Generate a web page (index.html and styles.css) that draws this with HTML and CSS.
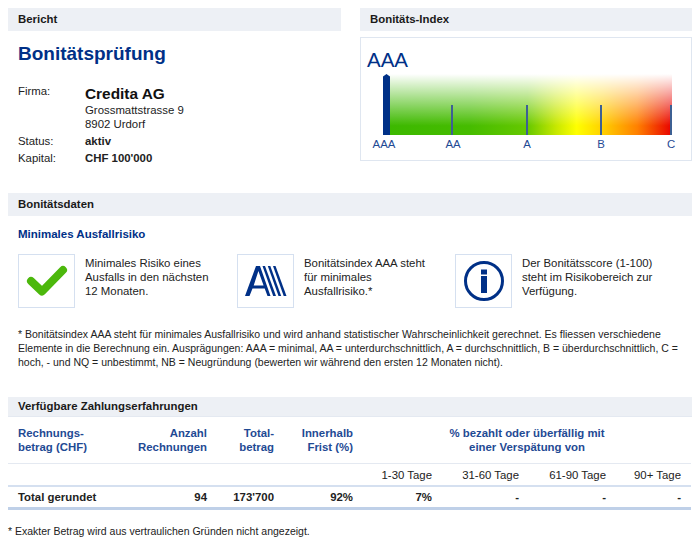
FILE: index.html
```html
<!DOCTYPE html>
<html>
<head>
	<meta charset="UTF-8">
	<title>Bonitätsprüfung</title>
	<link rel="stylesheet" href="styles.css">
</head>
<body>
	<div class="top">
		<div class="report">
			<div class="band">Bericht</div>
			<h1>Bonitätsprüfung</h1>
			<div class="facts">
				<div class="fact-label first">Firma:</div>
				<div class="fact-value first">
					<div class="company">Credita AG</div>
					<div>Grossmattstrasse 9</div>
					<div>8902 Urdorf</div>
				</div>
				<div class="fact-label">Status:</div>
				<div class="fact-value strong">aktiv</div>
				<div class="fact-label">Kapital:</div>
				<div class="fact-value strong">CHF 100'000</div>
			</div>
		</div>
		<div class="index">
			<div class="band">Bonitäts-Index</div>
			<div class="gauge">
				<div class="gauge-rating">AAA</div>
				<div class="gauge-bar">
					<div class="gauge-fade"></div>
					<svg class="gauge-marker" width="7" height="61" viewBox="0 0 7 61"><path d="M0 2.5 L3.5 0 L7 2.5 V61 H0 Z" fill="#003087"/></svg>
					<span class="tick tick-aa"></span>
					<span class="tick tick-a"></span>
					<span class="tick tick-b"></span>
					<span class="tick tick-c"></span>
				</div>
				<span class="scale scale-aaa">AAA</span>
				<span class="scale scale-aa">AA</span>
				<span class="scale scale-a">A</span>
				<span class="scale scale-b">B</span>
				<span class="scale scale-c">C</span>
			</div>
		</div>
	</div>

	<div class="band data-band">Bonitätsdaten</div>
	<h2>Minimales Ausfallrisiko</h2>
	<div class="cards">
		<div class="card">
			<div class="card-icon">
				<svg width="42" height="32" viewBox="0 0 42 32"><path d="M5 16 L16 26.5 L37 5" fill="none" stroke="#4cb80c" stroke-width="8" stroke-linecap="round" stroke-linejoin="round"/></svg>
			</div>
			<div class="card-text">Minimales Risiko eines<br>Ausfalls in den nächsten<br>12 Monaten.</div>
		</div>
		<div class="card">
			<div class="card-icon">
				<svg width="42" height="30" viewBox="0 0 42 30" fill="#003087"><path d="M0 30 L11 0 H15 L25.5 30 H22.5 L19.7 22.5 H7.5 L4.5 30 Z M8.7 19.5 H18.6 L13.4 5 Z" fill-rule="evenodd"/><path d="M17.5 0 H20 L31 30 H28.2 Z"/><path d="M22.8 0 H25.3 L36.2 30 H33.5 Z"/><path d="M28 0 H30.5 L41.5 30 H38.7 Z"/></svg>
			</div>
			<div class="card-text">Bonitätsindex AAA steht<br>für minimales<br>Ausfallrisiko.*</div>
		</div>
		<div class="card">
			<div class="card-icon">
				<svg width="42" height="42" viewBox="0 0 42 42"><circle cx="21" cy="21" r="18.5" fill="none" stroke="#003087" stroke-width="3"/><rect x="18" y="9.5" width="6" height="5" fill="#003087"/><rect x="18" y="16" width="6" height="17" fill="#003087"/></svg>
			</div>
			<div class="card-text">Der Bonitätsscore (1-100)<br>steht im Risikobereich zur<br>Verfügung.</div>
		</div>
	</div>
	<p class="note">* Bonitätsindex AAA steht für minimales Ausfallrisiko und wird anhand statistischer Wahrscheinlichkeit gerechnet. Es fliessen verschiedene Elemente in die Berechnung ein. Ausprägungen: AAA = minimal, AA = unterdurchschnittlich, A = durchschnittlich, B = überdurchschnittlich, C = hoch, - und NQ = unbestimmt, NB = Neugründung (bewerten wir während den ersten 12 Monaten nicht).</p>

	<div class="band table-band">Verfügbare Zahlungserfahrungen</div>
	<table>
		<colgroup>
			<col class="c1"><col class="c2"><col class="c3"><col class="c4"><col class="c5"><col class="c6"><col class="c7"><col class="c8">
		</colgroup>
		<tr class="head">
			<th class="left">Rechnungs-<br>betrag (CHF)</th>
			<th>Anzahl<br>Rechnungen</th>
			<th>Total-<br>betrag</th>
			<th>Innerhalb<br>Frist (%)</th>
			<th class="center" colspan="4">% bezahlt oder überfällig mit<br>einer Verspätung von</th>
		</tr>
		<tr class="sub">
			<td></td><td></td><td></td><td></td>
			<td>1-30 Tage</td><td>31-60 Tage</td><td>61-90 Tage</td><td>90+ Tage</td>
		</tr>
		<tr class="total">
			<td class="left">Total gerundet</td>
			<td>94</td><td>173'700</td><td>92%</td><td>7%</td><td>-</td><td>-</td><td>-</td>
		</tr>
	</table>
	<p class="foot">* Exakter Betrag wird aus vertraulichen Gründen nicht angezeigt.</p>
</body>
</html>
```

FILE: styles.css
```css
body {
	margin: 0;
	padding: 8px 8px 0;
	background-color: #fff;
	font-family: "Liberation Sans", Arial, sans-serif;
	font-size: 11.4px;
	line-height: 14px;
	color: #222;
}
.top {
	display: grid;
	grid-template-columns: 333px 332px;
	column-gap: 19px;
	height: 185px;
}
.band {
	height: 23px;
	line-height: 23px;
	padding-left: 10px;
	background-color: #edf0f5;
	font-weight: bold;
	color: #1a1a1a;
}
h1 {
	margin: 11px 0 0 10px;
	font-size: 19px;
	line-height: 24px;
	color: #003087;
}
.facts {
	display: grid;
	grid-template-columns: 67px 1fr;
	margin: 18px 0 0 10px;
	row-gap: 3px;
}
.company {
	font-size: 15.4px;
	line-height: 19px;
	font-weight: bold;
	color: #111;
}
.strong {
	font-weight: bold;
}
.gauge {
	position: relative;
	height: 122px;
	margin-top: 6px;
	border: 1px solid #dfe6f0;
}
.gauge-rating {
	position: absolute;
	left: 6px;
	top: 9px;
	font-size: 20.5px;
	line-height: 26px;
	color: #003087;
}
.gauge-bar {
	position: absolute;
	left: 22px;
	top: 36px;
	width: 289px;
	height: 61px;
	background: linear-gradient(to right, #3cb800 0%, #46bc00 30%, #66c800 50%, #c8e800 60%, #ffff00 67%, #ffd000 76%, #ff8000 88%, #e80000 100%);
}
.gauge-fade {
	position: absolute;
	inset: 0;
	background: linear-gradient(to bottom, #fff 0%, rgba(255, 255, 255, 0) 85%);
}
.gauge-marker {
	position: absolute;
	left: 0;
	top: 0;
	display: block;
}
.tick {
	position: absolute;
	bottom: 0;
	width: 2px;
	height: 30px;
	background-color: #3d6093;
}
.tick-aa { left: 68px; }
.tick-a { left: 143px; }
.tick-b { left: 217px; }
.tick-c { left: 287px; }
.scale {
	position: absolute;
	top: 99px;
	width: 40px;
	margin-left: -20px;
	text-align: center;
	color: #1f4a94;
}
.scale-aaa { left: 23px; }
.scale-aa { left: 92px; }
.scale-a { left: 166px; }
.scale-b { left: 240px; }
.scale-c { left: 310px; }
h2 {
	margin: 11px 0 0 10px;
	font-size: 11.5px;
	line-height: 14px;
	color: #003087;
}
.cards {
	display: grid;
	grid-template-columns: 219px 218px 1fr;
	margin: 13px 0 0 10px;
}
.card {
	display: flex;
	gap: 10px;
}
.card-icon {
	display: flex;
	align-items: center;
	justify-content: center;
	box-sizing: border-box;
	width: 57px;
	height: 54px;
	border: 1px solid #d5e0f0;
}
.card-text {
	padding-top: 2px;
}
.note {
	margin: 19px 0 0;
	font-size: 10.5px;
	line-height: 14px;
	padding-left: 10px;
	width: 665px;
}
.table-band {
	margin-top: 28px;
	height: 19px;
	line-height: 19px;
	border-bottom: 1px solid #e4e9f1;
}
table {
	width: 683px;
	border-collapse: collapse;
	table-layout: fixed;
}
.c1 { width: 109px; }
.c2 { width: 100px; }
.c3 { width: 67px; }
.c4 { width: 79px; }
.c5 { width: 79px; }
.c6 { width: 87px; }
.c7 { width: 87px; }
.c8 { width: 75px; }
th, td {
	padding: 0 10px 0 0;
	text-align: right;
}
th {
	color: #1f4a94;
}
.left {
	padding-left: 10px;
	text-align: left;
}
th.center {
	padding-left: 10px;
	text-align: center;
}
.head th {
	height: 46px;
	vertical-align: middle;
	border-bottom: 1px solid #e4e9f1;
}
.sub td {
	height: 21px;
	border-bottom: 2px solid #d5e0f0;
}
.total td {
	height: 20px;
	font-weight: bold;
	border-bottom: 3px solid #bfd0e8;
}
.foot {
	margin: 14px 0 0;
	font-size: 10.5px;
}
```
